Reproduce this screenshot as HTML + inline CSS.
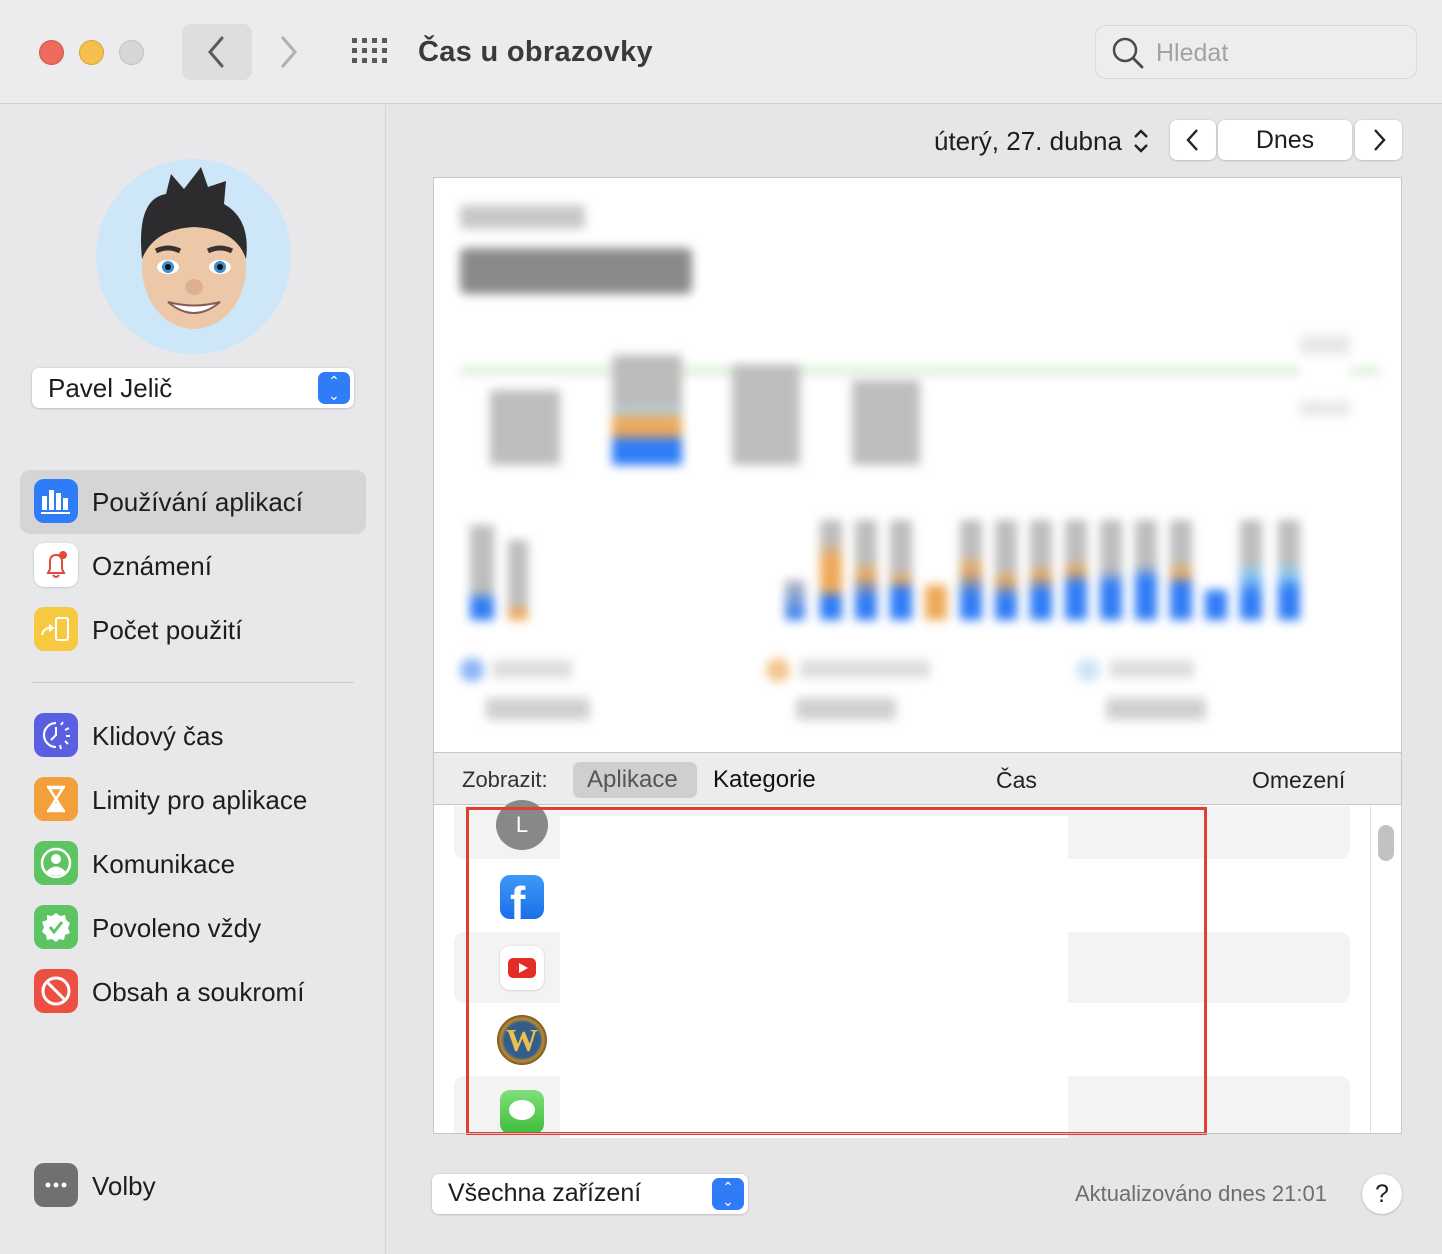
<!DOCTYPE html>
<html><head><meta charset="utf-8"><style>
*{box-sizing:border-box;margin:0;padding:0}
body{width:1442px;height:1254px;background:#e6e6e8;font-family:"Liberation Sans",sans-serif;color:#1d1d1f;position:relative;overflow:hidden}
.a{position:absolute}
.tb{left:0;top:0;width:1442px;height:104px;background:#ececee;border-bottom:1px solid #cfcfd1}
.side{left:0;top:105px;width:386px;height:1149px;background:#e8e8ea;border-right:1px solid #d4d4d6}
.dot{width:25px;height:25px;border-radius:50%;top:40px}
.item{left:20px;width:346px;height:64px;border-radius:10px}
.ic{left:34px;width:44px;height:44px;border-radius:10px}
.lab{left:92px;font-size:26px;color:#1d1d1f}
.bl{filter:blur(5px)}
</style></head><body>
<div class="a tb"></div>
<div class="a dot" style="left:39px;background:#ec6a5e;border:1px solid #d5574c"></div>
<div class="a dot" style="left:79px;background:#f5bf4f;border:1px solid #d9a33c"></div>
<div class="a dot" style="left:119px;background:#d6d6d8;border:1px solid #c2c2c4"></div>
<div class="a" style="left:182px;top:24px;width:70px;height:56px;border-radius:9px;background:#dedee0"></div>
<svg class="a" style="left:200px;top:34px" width="30" height="36"><path d="M22 4 L10 18 L22 32" stroke="#5a5a5c" stroke-width="3" fill="none" stroke-linecap="round"/></svg>
<svg class="a" style="left:275px;top:34px" width="30" height="36"><path d="M8 4 L20 18 L8 32" stroke="#b0b0b2" stroke-width="3" fill="none" stroke-linecap="round"/></svg>
<svg class="a" style="left:352px;top:38px" width="38" height="28"><g fill="#5a5a5c">
<rect x="0" y="0" width="5" height="5"/><rect x="10" y="0" width="5" height="5"/><rect x="20" y="0" width="5" height="5"/><rect x="30" y="0" width="5" height="5"/>
<rect x="0" y="10" width="5" height="5"/><rect x="10" y="10" width="5" height="5"/><rect x="20" y="10" width="5" height="5"/><rect x="30" y="10" width="5" height="5"/>
<rect x="0" y="20" width="5" height="5"/><rect x="10" y="20" width="5" height="5"/><rect x="20" y="20" width="5" height="5"/><rect x="30" y="20" width="5" height="5"/></g></svg>
<div class="a" style="left:418px;top:36px;font-size:29px;font-weight:bold;color:#3a3a3c;letter-spacing:0.3px">Čas u obrazovky</div>
<div class="a" style="left:1095px;top:25px;width:322px;height:54px;border:1px solid #dadadc;border-radius:10px;background:#ededef"></div>
<svg class="a" style="left:1110px;top:35px" width="36" height="36"><circle cx="15" cy="15" r="11" stroke="#4a4a4c" stroke-width="2.5" fill="none"/><path d="M23 23 L32 32" stroke="#4a4a4c" stroke-width="2.8" stroke-linecap="round"/></svg>
<div class="a" style="left:1156px;top:39px;font-size:25px;color:#a2a2a4">Hledat</div>

<div class="a side"></div>
<div class="a" style="left:96px;top:159px;width:195px;height:195px;border-radius:50%;background:#cde6f8;overflow:hidden">
<svg width="195" height="195" viewBox="0 0 195 195">
<ellipse cx="98" cy="108" rx="52" ry="62" fill="#ecc7a8"/>
<path d="M46 100 Q40 40 70 35 L75 15 L88 30 L105 8 L112 28 L130 22 L128 45 Q155 60 150 100 Q140 70 98 68 Q58 70 46 100Z" fill="#2c2c2e"/>
<ellipse cx="72" cy="108" rx="11" ry="7" fill="#fff"/><circle cx="72" cy="108" r="6" fill="#3d8ccf"/><circle cx="72" cy="108" r="3" fill="#111"/>
<ellipse cx="124" cy="108" rx="11" ry="7" fill="#fff"/><circle cx="124" cy="108" r="6" fill="#3d8ccf"/><circle cx="124" cy="108" r="3" fill="#111"/>
<path d="M60 92 Q72 86 84 92" stroke="#3a3230" stroke-width="5" fill="none"/><path d="M112 92 Q124 86 136 92" stroke="#3a3230" stroke-width="5" fill="none"/>
<ellipse cx="98" cy="128" rx="9" ry="8" fill="#dfb090"/>
<path d="M72 143 Q98 165 124 143 Q98 150 72 143Z" fill="#fff" stroke="#8a5a5a" stroke-width="2"/>
</svg></div>
<div class="a" style="left:32px;top:368px;width:322px;height:40px;background:#fff;border-radius:7px;box-shadow:0 0.5px 2px rgba(0,0,0,.25)"></div>
<div class="a" style="left:48px;top:373px;font-size:26px">Pavel Jelič</div>
<div class="a" style="left:318px;top:372px;width:32px;height:32px;border-radius:7px;background:#2f7cf6;color:#fff;font-size:14px;line-height:14px;text-align:center;padding-top:2px">⌃<br>⌄</div>

<div class="a item" style="top:470px;background:#d5d5d7"></div>
<div class="a ic" style="top:479px;background:#2f7cf6"><svg width="44" height="44"><g fill="#fff"><rect x="8" y="17" width="5" height="14"/><rect x="15" y="11" width="5" height="20"/><rect x="22" y="14" width="5" height="17"/><rect x="29" y="19" width="5" height="12"/><rect x="7" y="33" width="29" height="2"/></g></svg></div>
<div class="a lab" style="top:487px">Používání aplikací</div>
<div class="a ic" style="top:543px;background:#fff;box-shadow:0 0.5px 2px rgba(0,0,0,.2)"><svg width="44" height="44"><path d="M14 30 L30 30 L28 26 L28 19 Q28 12 22 12 Q16 12 16 19 L16 26Z M19 32 Q22 36 25 32" stroke="#e2483c" stroke-width="2" fill="none"/><circle cx="29" cy="12" r="4" fill="#e2483c"/></svg></div>
<div class="a lab" style="top:551px">Oznámení</div>
<div class="a ic" style="top:607px;background:#f7c940"><svg width="44" height="44"><rect x="22" y="11" width="12" height="22" rx="2" stroke="#fff" stroke-width="2" fill="none"/><path d="M8 28 Q10 20 18 21 M15 18 L19 21 L15 24" stroke="#fff" stroke-width="2" fill="none"/></svg></div>
<div class="a lab" style="top:615px">Počet použití</div>
<div class="a" style="left:32px;top:682px;width:322px;height:1px;background:#cdcdcf"></div>
<div class="a ic" style="top:713px;background:#5a5ee0"><svg width="44" height="44"><path d="M22 10 A12 12 0 1 0 22 34" stroke="#fff" stroke-width="2.2" fill="none"/><path d="M22 14 L22 22 L17 27" stroke="#fff" stroke-width="2" fill="none"/><g stroke="#fff" stroke-width="2"><path d="M27 12 L29 9"/><path d="M31 17 L35 15"/><path d="M32 23 L36 23"/><path d="M31 28 L34 31"/><path d="M26 32 L27 36"/></g></svg></div>
<div class="a lab" style="top:721px">Klidový čas</div>
<div class="a ic" style="top:777px;background:#f3a03a"><svg width="44" height="44"><path d="M13 10 L31 10 M13 34 L31 34 M15 11 L29 11 L22 22 L29 33 L15 33 L22 22Z" stroke="#fff" stroke-width="2.5" fill="none"/><path d="M16 32 L22 25 L28 32Z" fill="#fff"/></svg></div>
<div class="a lab" style="top:785px">Limity pro aplikace</div>
<div class="a ic" style="top:841px;background:#5dc464"><svg width="44" height="44"><circle cx="22" cy="22" r="14" stroke="#fff" stroke-width="2.5" fill="none"/><circle cx="22" cy="18" r="5" fill="#fff"/><path d="M12 31 Q22 20 32 31 Q22 38 12 31Z" fill="#fff"/></svg></div>
<div class="a lab" style="top:849px">Komunikace</div>
<div class="a ic" style="top:905px;background:#5dc464"><svg width="44" height="44"><path d="M22 8 L26 11 L31 10 L32 15 L36 18 L34 23 L36 28 L31 30 L30 35 L25 34 L22 37 L18 34 L13 35 L12 30 L8 27 L10 22 L8 17 L13 15 L13 10 L18 11Z" fill="#fff"/><path d="M16 22 L20 27 L28 17" stroke="#5dc464" stroke-width="3" fill="none"/></svg></div>
<div class="a lab" style="top:913px">Povoleno vždy</div>
<div class="a ic" style="top:969px;background:#eb5042"><svg width="44" height="44"><circle cx="22" cy="22" r="13" stroke="#fff" stroke-width="3" fill="none"/><path d="M13 13 L31 31" stroke="#fff" stroke-width="3"/></svg></div>
<div class="a lab" style="top:977px">Obsah a soukromí</div>
<div class="a ic" style="top:1163px;background:#707072"><svg width="44" height="44"><circle cx="14" cy="22" r="2.5" fill="#fff"/><circle cx="22" cy="22" r="2.5" fill="#fff"/><circle cx="30" cy="22" r="2.5" fill="#fff"/></svg></div>
<div class="a lab" style="top:1171px">Volby</div>

<div class="a" style="left:934px;top:126px;font-size:26px">úterý, 27. dubna</div>
<svg class="a" style="left:1132px;top:128px" width="18" height="26"><path d="M3 9 L9 3 L15 9 M3 17 L9 23 L15 17" stroke="#222" stroke-width="2.4" fill="none"/></svg>
<div class="a" style="left:1170px;top:120px;width:46px;height:40px;background:#fff;border-radius:7px;box-shadow:0 .5px 2px rgba(0,0,0,.25)"></div>
<div class="a" style="left:1218px;top:120px;width:134px;height:40px;background:#fff;border-radius:7px;box-shadow:0 .5px 2px rgba(0,0,0,.25);text-align:center;font-size:25px;line-height:40px">Dnes</div>
<div class="a" style="left:1355px;top:120px;width:47px;height:40px;background:#fff;border-radius:7px;box-shadow:0 .5px 2px rgba(0,0,0,.25)"></div>
<svg class="a" style="left:1182px;top:128px" width="22" height="24"><path d="M15 2 L6 12 L15 22" stroke="#222" stroke-width="2.4" fill="none"/></svg>
<svg class="a" style="left:1368px;top:128px" width="22" height="24"><path d="M7 2 L16 12 L7 22" stroke="#222" stroke-width="2.4" fill="none"/></svg>

<div class="a" style="left:433px;top:177px;width:969px;height:957px;border:1px solid #c6c6c8;background:#fff"></div>
<div class="a bl" style="left:460px;top:205px;width:125px;height:24px;background:#c8c8c8;border-radius:4px"></div>
<div class="a bl" style="left:460px;top:248px;width:232px;height:46px;background:#8a8a8a;border-radius:6px"></div>
<div class="a bl" style="left:460px;top:367px;width:920px;height:8px;background:#dcefd8"></div>
<div class="a bl" style="left:490px;top:390px;width:70px;height:75px;background:#bdbdbd"></div>
<div class="a bl" style="left:612px;top:355px;width:70px;height:110px;background:linear-gradient(#bcbcbc 0,#bcbcbc 45%,#b4cfe0 50%,#eea957 60%,#eea957 72%,#2f7cf6 78%)"></div>
<div class="a bl" style="left:732px;top:365px;width:68px;height:100px;background:#bdbdbd"></div>
<div class="a bl" style="left:852px;top:380px;width:68px;height:85px;background:#bdbdbd"></div>
<div class="a bl" style="left:1300px;top:330px;width:50px;height:150px;background:linear-gradient(#fff,#e0e0e0 10%,#fff 20%,#fff 45%,#e0e0e0 52%,#fff 60%)"></div>
<div class="a bl" style="left:470px;top:525px;width:24px;height:95px;background:linear-gradient(#bdbdbd 70%,#2f7cf6 80%)"></div>
<div class="a bl" style="left:508px;top:540px;width:20px;height:80px;background:linear-gradient(#bdbdbd 80%,#eea957 90%)"></div>
<div class="a bl" style="left:785px;top:580px;width:20px;height:40px;background:linear-gradient(#bdbdbd,#2f7cf6)"></div>
<div class="a bl" style="left:820px;top:520px;width:22px;height:100px;background:linear-gradient(#bdbdbd 20%,#eea957 40%,#eea957 70%,#2f7cf6 78%)"></div>
<div class="a bl" style="left:855px;top:520px;width:22px;height:100px;background:linear-gradient(#bdbdbd 40%,#eea957 55%,#2f7cf6 78%)"></div>
<div class="a bl" style="left:890px;top:520px;width:22px;height:100px;background:linear-gradient(#bdbdbd 50%,#eea957 60%,#2f7cf6 70%)"></div>
<div class="a bl" style="left:925px;top:585px;width:22px;height:35px;background:#eea957"></div>
<div class="a bl" style="left:960px;top:520px;width:22px;height:100px;background:linear-gradient(#bdbdbd 35%,#eea957 50%,#2f7cf6 75%)"></div>
<div class="a bl" style="left:995px;top:520px;width:22px;height:100px;background:linear-gradient(#bdbdbd 50%,#eea957 60%,#2f7cf6 78%)"></div>
<div class="a bl" style="left:1030px;top:520px;width:22px;height:100px;background:linear-gradient(#bdbdbd 45%,#eea957 55%,#2f7cf6 72%)"></div>
<div class="a bl" style="left:1065px;top:520px;width:22px;height:100px;background:linear-gradient(#bdbdbd 40%,#eea957 50%,#2f7cf6 65%)"></div>
<div class="a bl" style="left:1100px;top:520px;width:22px;height:100px;background:linear-gradient(#bdbdbd 50%,#2f7cf6 65%)"></div>
<div class="a bl" style="left:1135px;top:520px;width:22px;height:100px;background:linear-gradient(#bdbdbd 45%,#2f7cf6 60%)"></div>
<div class="a bl" style="left:1170px;top:520px;width:22px;height:100px;background:linear-gradient(#bdbdbd 40%,#eea957 55%,#2f7cf6 65%)"></div>
<div class="a bl" style="left:1205px;top:590px;width:22px;height:30px;background:#2f7cf6"></div>
<div class="a bl" style="left:1240px;top:520px;width:22px;height:100px;background:linear-gradient(#bdbdbd 40%,#8cc8ef 55%,#2f7cf6 75%)"></div>
<div class="a bl" style="left:1278px;top:520px;width:22px;height:100px;background:linear-gradient(#bdbdbd 40%,#8cc8ef 55%,#2f7cf6 70%)"></div>
<div class="a bl" style="left:460px;top:658px;width:24px;height:24px;border-radius:50%;background:#8cb4f5"></div>
<div class="a bl" style="left:492px;top:660px;width:80px;height:18px;background:#ddd"></div>
<div class="a bl" style="left:486px;top:698px;width:104px;height:22px;background:#d0d0d0"></div>
<div class="a bl" style="left:766px;top:658px;width:24px;height:24px;border-radius:50%;background:#f3c48f"></div>
<div class="a bl" style="left:800px;top:660px;width:130px;height:18px;background:#ddd"></div>
<div class="a bl" style="left:796px;top:698px;width:100px;height:22px;background:#d0d0d0"></div>
<div class="a bl" style="left:1076px;top:658px;width:24px;height:24px;border-radius:50%;background:#cbe6f5"></div>
<div class="a bl" style="left:1110px;top:660px;width:84px;height:18px;background:#ddd"></div>
<div class="a bl" style="left:1106px;top:698px;width:100px;height:22px;background:#d0d0d0"></div>

<div class="a" style="left:434px;top:752px;width:967px;height:53px;background:#ececee;border-top:1px solid #c6c6c8;border-bottom:1px solid #c6c6c8"></div>
<div class="a" style="left:462px;top:767px;font-size:22px;color:#333">Zobrazit:</div>
<div class="a" style="left:573px;top:762px;width:124px;height:36px;border-radius:7px;background:#cfcfd1"></div>
<div class="a" style="left:587px;top:766px;font-size:24px;color:#555">Aplikace</div>
<div class="a" style="left:713px;top:766px;font-size:24px;color:#111">Kategorie</div>
<div class="a" style="left:996px;top:767px;font-size:23px;color:#222">Čas</div>
<div class="a" style="left:1252px;top:767px;font-size:23px;color:#222">Omezení</div>

<div class="a" style="left:454px;top:806px;width:896px;height:53px;background:#f3f3f4;border-radius:0 0 10px 10px"></div>
<div class="a" style="left:454px;top:932px;width:896px;height:71px;background:#f3f3f4;border-radius:10px"></div>
<div class="a" style="left:454px;top:1076px;width:896px;height:57px;background:#f3f3f4;border-radius:10px 10px 0 0"></div>
<div class="a" style="left:1370px;top:806px;width:1px;height:327px;background:#e0e0e0"></div>
<div class="a" style="left:1378px;top:825px;width:16px;height:36px;border-radius:8px;background:#c2c2c4"></div>
<div class="a" style="left:496px;top:800px;width:52px;height:50px;border-radius:50%;background:#888;color:#fff;font-size:22px;text-align:center;line-height:50px">L</div>
<div class="a" style="left:500px;top:875px;width:44px;height:44px;border-radius:10px;background:linear-gradient(#3d9af8,#1a6ee8);overflow:hidden"><div style="position:absolute;left:10px;top:6px;color:#fff;font-size:46px;font-weight:bold;line-height:44px">f</div></div>
<div class="a" style="left:500px;top:946px;width:44px;height:44px;border-radius:10px;background:#fff;box-shadow:0 .5px 2px rgba(0,0,0,.2)"><div style="position:absolute;left:8px;top:12px;width:28px;height:20px;border-radius:5px;background:#e52d27"></div><div style="position:absolute;left:19px;top:17px;border-left:9px solid #fff;border-top:5px solid transparent;border-bottom:5px solid transparent"></div></div>
<div class="a" style="left:497px;top:1015px;width:50px;height:50px;border-radius:50%;background:radial-gradient(#345d8c 50%,#b88a34 60%,#5a3d14 75%);color:#e9c24e;font-family:'Liberation Serif',serif;font-weight:bold;font-size:32px;text-align:center;line-height:50px">W</div>
<div class="a" style="left:500px;top:1090px;width:44px;height:44px;border-radius:10px;background:linear-gradient(#7fe07a,#3fbd3a)"><div style="position:absolute;left:9px;top:10px;width:26px;height:20px;border-radius:50%;background:#fff"></div></div>
<div class="a" style="left:560px;top:816px;width:508px;height:322px;background:#fff"></div>
<div class="a" style="left:466px;top:807px;width:741px;height:328px;border:3px solid #e0402f"></div>
<div class="a" style="left:433px;top:1133px;width:969px;height:1px;background:#c6c6c8"></div>

<div class="a" style="left:432px;top:1174px;width:316px;height:40px;background:#fff;border-radius:7px;box-shadow:0 .5px 2px rgba(0,0,0,.25)"></div>
<div class="a" style="left:448px;top:1179px;font-size:25px">Všechna zařízení</div>
<div class="a" style="left:712px;top:1178px;width:32px;height:32px;border-radius:7px;background:#2f7cf6;color:#fff;font-size:14px;line-height:14px;text-align:center;padding-top:2px">⌃<br>⌄</div>
<div class="a" style="left:1075px;top:1181px;font-size:22px;color:#6e6e70">Aktualizováno dnes 21:01</div>
<div class="a" style="left:1362px;top:1174px;width:40px;height:40px;border-radius:50%;background:#fff;box-shadow:0 .5px 2px rgba(0,0,0,.3);text-align:center;font-size:25px;line-height:40px">?</div>
</body></html>
